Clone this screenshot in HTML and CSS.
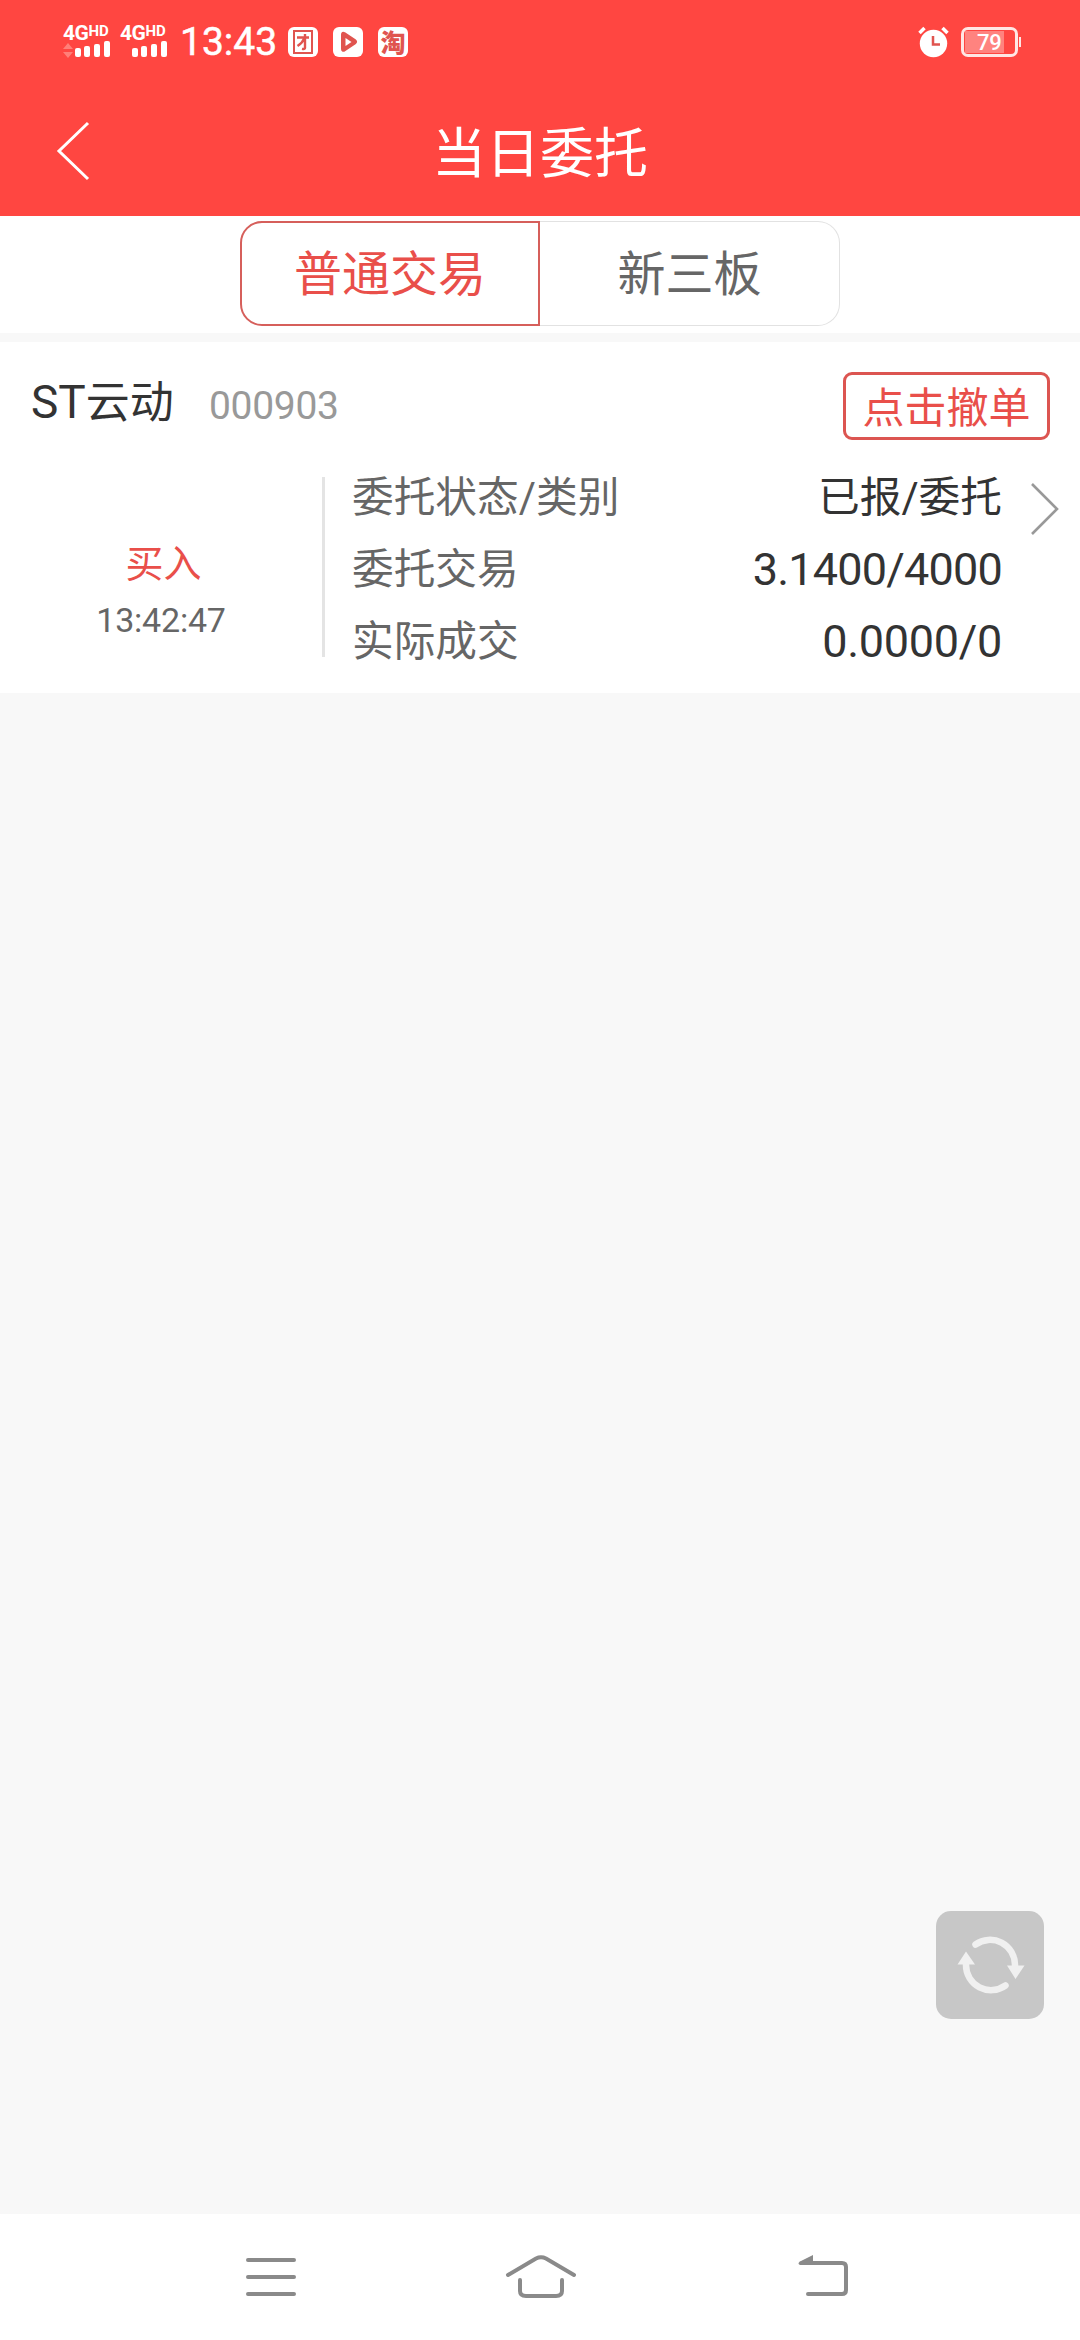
FILE: index.html
```html
<!DOCTYPE html>
<html lang="zh-CN">
<head>
<meta charset="utf-8">
<title>当日委托</title>
<link rel="stylesheet" href="styles.css">
</head>
<body>
<div class="screen">
  <header class="header">
    <div class="status">
      <div class="status-left">
        <div class="signal">
          <div class="net">4G<span class="hd">HD</span></div>
          <svg class="bars" width="48" height="18" viewBox="0 0 48 18">
            <path d="M5 3l5 6H0zM5 18l5-6H0z" fill="#ff7f78"/>
            <g fill="#fff"><rect x="12" y="8" width="6" height="9" rx="2"/><rect x="21" y="6" width="6" height="11" rx="2"/><rect x="31" y="4" width="6" height="13" rx="2"/><rect x="41" y="1" width="6" height="16" rx="2"/></g>
          </svg>
        </div>
        <div class="signal">
          <div class="net">4G<span class="hd">HD</span></div>
          <svg class="bars" width="48" height="18" viewBox="0 0 48 18">
            <g fill="#fff"><rect x="12" y="8" width="6" height="9" rx="2"/><rect x="21" y="6" width="6" height="11" rx="2"/><rect x="31" y="4" width="6" height="13" rx="2"/><rect x="41" y="1" width="6" height="16" rx="2"/></g>
          </svg>
        </div>
        <div class="clock">13:43</div>
        <div class="apps">
          <svg width="30" height="30" viewBox="0 0 30 30"><rect width="30" height="30" rx="6" fill="#fff"/><g fill="none" stroke="#e0544f" stroke-width="2"><path d="M6 4h18v22H6z"/><path d="M9 10.500h12M17 7v14q0 1.500-3 .8M16.500 11q-2 5-7 8" stroke-width="2.400"/></g></svg>
          <svg width="30" height="30" viewBox="0 0 30 30"><rect width="30" height="30" rx="6" fill="#fff"/><path d="M9.500 7.500q0-1.800 1.700-1l10.500 7q1.800 1.300 0 2.600l-10.500 7q-1.700.8-1.700-1z" fill="#e0544f" stroke="#e0544f" stroke-width="3" stroke-linejoin="round"/><path d="M12.500 11v8l6-4z" fill="#fff"/></svg>
          <div class="tao">淘</div>
        </div>
      </div>
      <div class="status-right">
        <svg width="32" height="32" viewBox="0 0 32 32"><circle cx="15.500" cy="17.500" r="13.700" fill="#fff"/><path d="M1.500 7l5-5M29.500 7l-5-5" stroke="#fff" stroke-width="3.500"/><path d="M15 10v8.500h7" fill="none" stroke="#e0544f" stroke-width="2.500"/></svg>
        <div class="battery"><div class="case"><span class="level">79</span></div><i class="nub"></i></div>
      </div>
    </div>
    <div class="titlebar">
      <svg class="back" width="34" height="60" viewBox="0 0 34 60"><path d="M32 2L3 30l29 28" fill="none" stroke="#fff" stroke-width="3"/></svg>
      <h1 class="title">当日委托</h1>
    </div>
  </header>

  <nav class="tabs">
    <div class="tab active">普通交易</div>
    <div class="tab">新三板</div>
  </nav>

  <main class="content">
    <section class="card">
      <div class="card-head">
        <div class="name"><span class="st">ST</span>云动</div>
        <div class="code">000903</div>
        <div class="cancel">点击撤单</div>
      </div>
      <div class="card-body">
        <div class="side">
          <div class="buy">买入</div>
          <div class="time">13:42:47</div>
        </div>
        <div class="rows">
          <div class="row"><span class="label">委托状态/类别</span><span class="value">已报/委托</span></div>
          <div class="row"><span class="label">委托交易</span><span class="value figure order">3.1400/4000</span></div>
          <div class="row"><span class="label">实际成交</span><span class="value figure">0.0000/0</span></div>
        </div>
        <svg class="more" width="30" height="54" viewBox="0 0 30 54"><path d="M2 2l25 25L2 52" fill="none" stroke="#999" stroke-width="2.600"/></svg>
      </div>
    </section>
    <div class="refresh">
      <svg width="72" height="64" viewBox="0 0 72 64"><g fill="none" stroke="#f0f0f0" stroke-width="6.500" stroke-linecap="round"><path d="M21.500 11.500A25 25 0 0 1 61 32v5"/><path d="M51.500 52.500A25 25 0 0 1 12 32v-5"/></g><path d="M53 32.500h17.500L61.500 46zM3.500 31.500h17.500L12 18.500z" fill="#f0f0f0"/></svg>
    </div>
  </main>

  <footer class="navbar">
    <svg width="50" height="44" viewBox="0 0 50 44"><path d="M2 5h46M2 22h46M2 39h46" stroke="#8a8a8a" stroke-width="4" stroke-linecap="round"/></svg>
    <svg width="72" height="44" viewBox="0 0 72 44"><g fill="none" stroke="#8a8a8a" stroke-width="4" stroke-linecap="round"><path d="M3 20L31 3.500q5-2.500 10 0L69 20"/><path d="M15 25v11q0 5 6 5h30q6 0 6-5V25"/></g></svg>
    <svg width="52" height="44" viewBox="0 0 52 44"><path d="M10 39h34q4 0 4-4V12q0-4-4-4H4" fill="none" stroke="#8a8a8a" stroke-width="4" stroke-linecap="round"/><path d="M15 0v10H2q-3-1.500 0-3.500z" fill="#8a8a8a"/></svg>
  </footer>
</div>
</body>
</html>
```
FILE: styles.css
```css
* { box-sizing: border-box; }
body { margin: 0; font-family: Roboto, "Noto Sans CJK SC", sans-serif; }
svg { display: block; flex: none; }
.screen { width: 1080px; height: 2340px; display: flex; flex-direction: column; background: #f8f8f8; overflow: hidden; }

.header { height: 216px; background: #ff4641; color: #fff; }
.status { height: 84px; display: flex; justify-content: space-between; padding: 0 59px 0 63px; }
.status-left, .status-right { display: flex; align-items: center; }
.signal { width: 48px; margin-right: 9px; padding-bottom: 2px; }
.net { display: flex; height: 16px; font: 700 21px/17px Roboto, sans-serif; letter-spacing: -0.5px; }
.hd { font-size: 15px; line-height: 13px; letter-spacing: 0; }
.bars { margin-top: -1px; }
.clock { width: 111px; padding-left: 3px; font: 400 39px/42px Roboto, sans-serif; -webkit-text-stroke: 0.5px #fff; white-space: nowrap; }
.apps { display: flex; gap: 15px; }
.tao { width: 30px; height: 30px; border-radius: 6px; background: #fff; color: #e0544f; font: 900 25px/29px "Noto Sans CJK SC", sans-serif; text-align: center; }
.status-right { gap: 11px; padding-bottom: 1px; }
.battery { display: flex; align-items: center; gap: 1px; }
.case { width: 57px; height: 30px; border: 3px solid #ffe6e4; border-radius: 7px; padding: 1px; }
.level { display: block; width: 39px; height: 22px; padding-left: 12px; background: #ff837f; font: 500 22px/23px Roboto, sans-serif; letter-spacing: -0.3px; }
.nub { width: 2px; height: 10px; background: #ffe6e4; }
.titlebar { height: 132px; display: grid; grid-template-columns: 1fr auto 1fr; align-items: center; padding: 0 56px; }
.back { margin-top: 2px; }
.title { margin: 0; font-size: 54px; font-weight: 400; line-height: 64px; padding-top: 9px; }

.tabs { height: 117px; display: flex; justify-content: center; padding-top: 5px; background: #fff; }
.tab { width: 300px; height: 105px; border: 1px solid #e2e2e2; border-left: 0; border-radius: 0 22px 22px 0; color: #666; font-size: 48px; line-height: 106px; text-align: center; }
.tab.active { border: 2px solid #d65f5b; border-radius: 22px 0 0 22px; color: #e94f4a; line-height: 104px; }

.content { flex: 1; display: flex; flex-direction: column; justify-content: space-between; padding: 9px 0 195px; }
.card { height: 351px; background: #fff; padding: 30px 0 0; }
.card-head { height: 68px; display: flex; align-items: center; padding: 0 30px 0 31px; }
.name { width: 178px; font-size: 44px; line-height: 60px; color: #333; padding-bottom: 8px; white-space: nowrap; }
.st { font-size: 46px; }
.code { flex: 1; font-size: 39px; line-height: 44px; letter-spacing: -0.3px; color: #999; }
.cancel { width: 207px; height: 68px; border: 3px solid #dc5551; border-radius: 9px; color: #e94f4a; font-size: 42px; line-height: 67px; text-align: center; }
.card-body { display: flex; padding-top: 37px; }
.side { width: 322px; height: 180px; display: flex; flex-direction: column; align-items: center; padding-top: 64px; }
.buy { font-size: 38px; line-height: 46px; color: #e94f4a; padding-left: 5px; }
.time { font-size: 34px; line-height: 38px; letter-spacing: -0.2px; color: #666; margin-top: 14px; }
.rows { width: 680px; height: 180px; border-left: 3px solid #e4e4e4; padding-left: 27px; }
.row { display: flex; justify-content: space-between; height: 72px; font-size: 41.700px; line-height: 42px; color: #333; }
.label { color: #666; }
.figure { font-size: 45px; line-height: 42px; letter-spacing: -0.3px; }
.order { letter-spacing: -0.8px; }
.more { margin: 5px 0 0 28px; }

.refresh { align-self: flex-end; width: 108px; height: 108px; margin-right: 36px; border-radius: 15px; background: #c7c7c7; display: flex; align-items: center; justify-content: center; }

.navbar { height: 126px; display: grid; grid-template-columns: 259px 293px 52px; align-content: start; padding: 41px 0 0 246px; background: #fff; }
```
